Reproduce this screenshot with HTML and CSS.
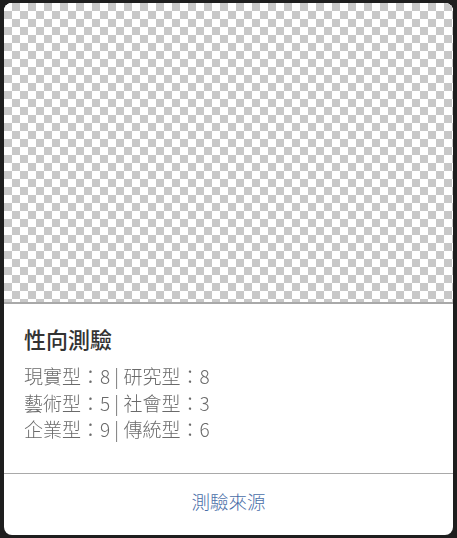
FILE: index.html
```html
<!DOCTYPE html>
<html lang="zh-Hant">
<head>
<meta charset="utf-8">
<title>性向測驗</title>
<link rel="stylesheet" href="styles.css">
</head>
<body>
  <div class="card">
    <div class="card-img"></div>
    <div class="card-body">
      <h5 class="card-title">性向測驗</h5>
      <p class="card-text">現實型：8 | 研究型：8<br>藝術型：5 | 社會型：3<br>企業型：9 | 傳統型：6</p>
    </div>
    <div class="card-footer">
      <a class="card-link" href="#">測驗來源</a>
    </div>
  </div>
</body>
</html>
```
FILE: styles.css
```css
html, body {
  margin: 0;
  padding: 0;
  background: #1e1e1e;
}
body {
  padding: 3px 4px;
  font-family: "Noto Sans CJK TC", "Noto Sans", sans-serif;
}
.card {
  width: 449px;
  height: 532px;
  background: #fff;
  border-radius: 8px;
  overflow: hidden;
  display: flex;
  flex-direction: column;
}
.card-img {
  height: 299px;
  flex: none;
  border-bottom: 2px solid #a9a9a9;
  background-color: #fff;
  background-image: conic-gradient(#c8c8c8 0 25%, #fff 0 50%, #c8c8c8 0 75%, #fff 0);
  background-size: 16px 16px;
}
.card-body {
  height: 170px;
  flex: none;
  padding: 20px 20px 0 20px;
  box-sizing: border-box;
  border-bottom: 1px solid #a9a9a9;
}
.card-title {
  margin: 0 0 11px 0;
  font-size: 22px;
  line-height: 28px;
  font-weight: 500;
  color: #333;
}
.card-text {
  margin: 0;
  font-size: 19px;
  line-height: 26.5px;
  font-weight: 300;
  color: #6a6a6a;
  will-change: transform;
}
.card-footer {
  flex: 1;
  display: flex;
  align-items: center;
  justify-content: center;
  padding-bottom: 8px;
}
.card-link {
  font-size: 18.5px;
  font-weight: 300;
  color: #4a6ea8;
  text-decoration: none;
}
```
